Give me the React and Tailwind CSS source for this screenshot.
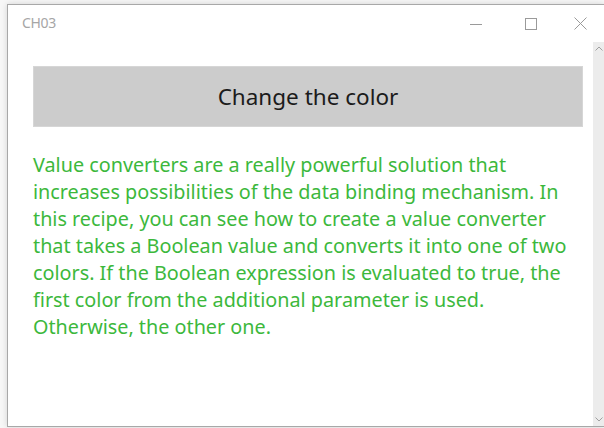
import React from "react";

const font = { fontFamily: '"Noto Sans", "Open Sans", sans-serif' };

const App = () => {
    return (
        <div className="w-[604px] h-[428px] bg-[#f7f7f7] overflow-hidden pl-[7px] pt-[4px]" style={font}>
            <div className="h-[423px] bg-white border border-r-0 border-[#a8a8a8] shadow-[0_0_6px_rgba(0,0,0,0.15)] flex flex-col">

                {/* Title bar */}
                <div className="h-[37px] flex items-center shrink-0">
                    <span className="pl-[14px] -mt-[3px] text-[14px] text-[#a6a6a6] tracking-tight">CH03</span>
                    <div className="ml-auto flex items-center h-full">
                        <div className="w-[55px] h-full flex items-center justify-center pt-[2px]">
                            <div className="w-[12px] h-px bg-[#9a9a9a]" />
                        </div>
                        <div className="w-[55px] h-full flex items-center justify-center">
                            <div className="w-[12px] h-[12px] border border-[#9a9a9a]" />
                        </div>
                        <div className="w-[46px] h-full flex items-center justify-center pr-[2px]">
                            <svg width="13" height="13" viewBox="0 0 13 13">
                                <path d="M0.5 0.5 L12.5 12.5 M12.5 0.5 L0.5 12.5" stroke="#9a9a9a" strokeWidth="1" fill="none" />
                            </svg>
                        </div>
                    </div>
                </div>

                {/* Client area */}
                <div className="flex flex-1 min-h-0">
                    <div className="flex-1 pl-[25px] pr-[10px] pt-[24px]">
                        <button className="w-full h-[61px] bg-[#cccccc] border border-[#d6d6d6] text-[22.5px] text-[#1b1b1b]">
                            Change the color
                        </button>
                        <p className="mt-[24px] w-full text-[19.8px] leading-[27px] text-[#3cb83c]">
                            Value converters are a really powerful solution that increases possibilities of the data binding mechanism. In this recipe, you can see how to create a value converter that takes a Boolean value and converts it into one of two colors. If the Boolean expression is evaluated to true, the first color from the additional parameter is used. Otherwise, the other one.
                        </p>
                    </div>

                    {/* Scrollbar */}
                    <div className="w-[11px] bg-[#ececec] flex flex-col items-center justify-between py-[4px]">
                        <svg width="8" height="5" viewBox="0 0 8 5">
                            <path d="M0.5 4.5 L4 1 L7.5 4.5" stroke="#a0a0a0" fill="none" />
                        </svg>
                        <svg width="8" height="5" viewBox="0 0 8 5">
                            <path d="M0.5 0.5 L4 4 L7.5 0.5" stroke="#a0a0a0" fill="none" />
                        </svg>
                    </div>
                </div>
            </div>
        </div>
    );
};

export default App;
